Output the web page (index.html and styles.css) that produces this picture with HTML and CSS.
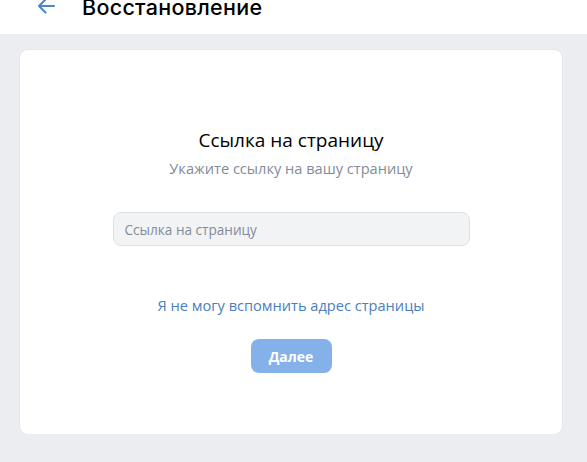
FILE: index.html
```html
<!DOCTYPE html>
<html>
<head>
    <title>Восстановление</title>
    <meta name="viewport" content="width=device-width, initial-scale=1">
    <link rel="stylesheet" href="styles.css">
</head>

<body>
    <div class="header">
        <a class="back-btn" href="#">
            <svg width="20" height="20" viewBox="0 0 20 20" fill="none">
                <path d="M18 10H3M9.5 3.5L3 10l6.5 6.5" stroke="#4986cc" stroke-width="2" stroke-linecap="round" stroke-linejoin="round"/>
            </svg>
        </a>
        <h1 class="header-title">Восстановление</h1>
    </div>

    <div class="card">
        <h2 class="card-title">Ссылка на страницу</h2>
        <div class="card-subtitle">Укажите ссылку на вашу страницу</div>

        <form id="form" class="form">
            <input type="text" class="field" placeholder="Ссылка на страницу">
            <a href="#" class="forgot-link">Я не могу вспомнить адрес страницы</a>
            <button type="submit" class="next-btn" disabled>Далее</button>
        </form>
    </div>
</body>
</html>
```

FILE: styles.css
```css
body {
    font-family: "Open Sans", "Noto Sans", Arial, sans-serif;
    margin: 0;
    padding: 0;
    background-color: #ebedf0;
    color: #000;
}

.header {
    height: 56px;
    margin-top: -22px;
    background-color: #fff;
    display: flex;
    align-items: flex-end;
    padding: 0 0 10px 36px;
    box-sizing: border-box;
}

.back-btn {
    display: flex;
    width: 20px;
    height: 20px;
    margin-bottom: 8px;
}

.header-title {
    margin: 0 0 4px 26px;
    font-family: Inter, Roboto, Arial, sans-serif;
    font-size: 21.5px;
    font-weight: 500;
    line-height: 26px;
    letter-spacing: 0.3px;
}

.card {
    width: 542px;
    height: 384px;
    margin: 16px 0 0 20px;
    background-color: #fff;
    border-radius: 8px;
    box-shadow: 0 0 0 1px #e3e6ea;
    padding-top: 77px;
    box-sizing: border-box;
    text-align: center;
}

.card-title {
    margin: 0;
    font-size: 19px;
    font-weight: 500;
    line-height: 26px;
}

.card-subtitle {
    margin-top: 5px;
    font-size: 14.6px;
    line-height: 20px;
    color: #818c99;
}

.form {
    display: flex;
    flex-direction: column;
    align-items: center;
    margin-top: 34px;
}

.field {
    width: 357px;
    height: 34px;
    padding: 0 11px;
    box-sizing: border-box;
    border: 1px solid #dce1e6;
    border-radius: 8px;
    background-color: #f2f3f5;
    font-family: inherit;
    font-size: 13.6px;
    color: #000;
    outline: none;
}

.field::placeholder {
    color: #818c99;
}

.forgot-link {
    margin-top: 49px;
    font-size: 14.6px;
    line-height: 20px;
    color: #4a80bd;
    text-decoration: none;
}

.next-btn {
    margin-top: 24px;
    width: 81px;
    height: 34px;
    border: none;
    border-radius: 8px;
    background-color: #84b1ea;
    color: #fff;
    font-family: inherit;
    font-size: 14px;
    font-weight: 700;
}
```
